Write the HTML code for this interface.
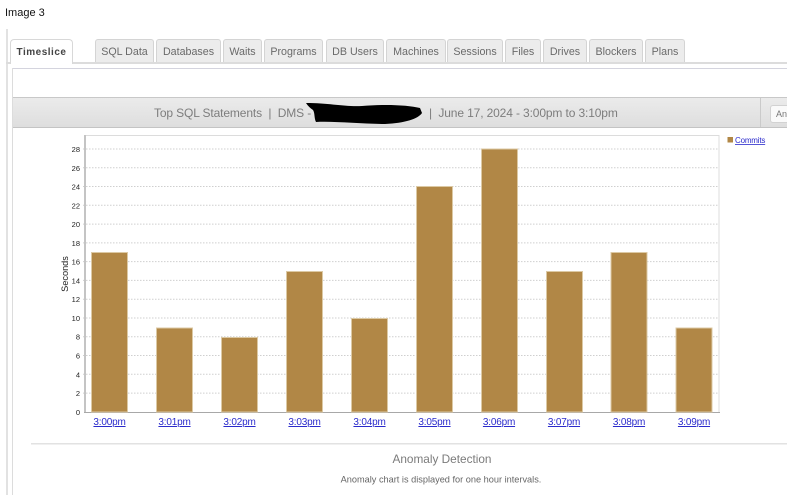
<!DOCTYPE html>
<html><head><meta charset="utf-8">
<style>
html,body{margin:0;padding:0;background:#fff;}
body{width:797px;height:495px;overflow:hidden;position:relative;font-family:"Liberation Sans",sans-serif;}
.a{position:absolute;}
.tab{position:absolute;top:39px;height:23px;box-sizing:border-box;background:#ececec;border:1px solid #d4d4d4;border-bottom:none;border-radius:3px 3px 0 0;color:#6a6a6a;font-size:10.7px;line-height:24px;text-align:center;}
</style></head><body>
<div class="a" style="left:5px;top:6px;font-size:11px;line-height:14px;color:#111;">Image 3</div>

<div class="a" style="left:6px;top:29px;width:2px;height:466px;background:#e2e2e2;"></div>
<div class="a" style="left:6px;top:62px;width:781px;height:2px;background:#dcdcdc;"></div>

<div class="tab" style="left:95px;width:59px;">SQL Data</div>
<div class="tab" style="left:156px;width:65px;">Databases</div>
<div class="tab" style="left:223px;width:39px;">Waits</div>
<div class="tab" style="left:264px;width:59px;">Programs</div>
<div class="tab" style="left:326px;width:58px;">DB Users</div>
<div class="tab" style="left:386px;width:60px;">Machines</div>
<div class="tab" style="left:447px;width:56px;">Sessions</div>
<div class="tab" style="left:505px;width:36px;">Files</div>
<div class="tab" style="left:543px;width:44px;">Drives</div>
<div class="tab" style="left:589px;width:54px;">Blockers</div>
<div class="tab" style="left:645px;width:40px;">Plans</div>

<div class="a" style="left:10px;top:39px;width:63px;height:25px;box-sizing:border-box;background:#fff;border:1px solid #d8d8d8;border-bottom:none;border-radius:4px 4px 0 0;color:#444;font-size:10px;font-weight:bold;line-height:25px;text-align:center;letter-spacing:.5px;">Timeslice</div>

<div class="a" style="left:12px;top:68px;width:775px;height:1px;background:#d4d4de;"></div>
<div class="a" style="left:12px;top:68px;width:1px;height:427px;background:#dcdcdc;"></div>

<div class="a" style="left:13px;top:97px;width:774px;height:31px;box-sizing:border-box;background:linear-gradient(#ebebeb,#dedede);border-top:1px solid #c8c8c8;border-bottom:1px solid #c4c4c4;"></div>
<div class="a" style="left:13px;top:99px;width:760px;height:29px;color:#7d7d7d;font-size:12px;line-height:29px;white-space:pre;letter-spacing:-.13px;">
<span class="a" style="left:141px;top:0;">Top SQL Statements  |  DMS -</span>
<span class="a" style="left:416px;top:0;">|  June 17, 2024 - 3:00pm to 3:10pm</span>
</div>
<svg class="a" style="left:300px;top:98px;" width="130" height="28"><path d="M6 5 C30 5 45 9 62 8 C85 6 108 7 120 10 L122 15 C118 21 105 25 85 26 C60 26 35 23 16 24 C14 20 15 15 13 12 C10 10 8 8 6 5 Z" fill="#000"/></svg>
<div class="a" style="left:760px;top:98px;width:1px;height:29px;background:#cacaca;"></div>
<div class="a" style="left:770px;top:105px;width:17px;height:18px;box-sizing:border-box;background:#fafafa;border:1px solid #d2d2d2;border-right:none;border-radius:3px 0 0 3px;color:#777;font-size:9px;line-height:16px;padding-left:5px;overflow:hidden;">An</div>

<svg class="a" style="left:0;top:0;" width="797" height="495" font-family="Liberation Sans, sans-serif">
<rect x="85" y="135.500" width="634" height="277" fill="#fff" stroke="#dcdcdc"/>
<g stroke="#cfcfcf" stroke-dasharray="1.500 1.500">
<path d="M83 149H719M83 167.800H719M83 186.500H719M83 205.300H719M83 224.100H719M83 242.900H719M83 261.600H719M83 280.400H719M83 299.200H719M83 318H719M83 336.700H719M83 355.500H719M83 374.300H719M83 393.100H719"/>
</g>
<rect x="84" y="135" width="2" height="278" fill="#c4c4c4"/>
<rect x="84" y="412" width="636" height="1" fill="#a8a8a8"/>
<g fill="#b18746" stroke="#dcc9a4" stroke-width="1">
<rect x="91.500" y="252.500" width="36" height="159.500"/>
<rect x="156.500" y="328" width="36" height="84"/>
<rect x="221.500" y="337.500" width="36" height="74.500"/>
<rect x="286.500" y="271.500" width="36" height="140.500"/>
<rect x="351.500" y="318.500" width="36" height="93.500"/>
<rect x="416.500" y="186.500" width="36" height="225.500"/>
<rect x="481.500" y="149" width="36" height="263"/>
<rect x="546.500" y="271.500" width="36" height="140.500"/>
<rect x="611" y="252.500" width="36" height="159.500"/>
<rect x="676" y="328" width="36" height="84"/>
</g>
<g font-size="7.500" fill="#222" text-anchor="end">
<text x="80" y="152">28</text><text x="80" y="170.800">26</text><text x="80" y="189.500">24</text><text x="80" y="208.300">22</text><text x="80" y="227.100">20</text><text x="80" y="245.900">18</text><text x="80" y="264.600">16</text><text x="80" y="283.400">14</text><text x="80" y="302.200">12</text><text x="80" y="321">10</text><text x="80" y="339.700">8</text><text x="80" y="358.500">6</text><text x="80" y="377.300">4</text><text x="80" y="396.100">2</text><text x="80" y="415">0</text>
</g>
<text transform="translate(68,274) rotate(-90)" font-size="9.200" fill="#222" text-anchor="middle">Seconds</text>
<g font-size="10" letter-spacing="-.2" fill="#2b2bcc" text-anchor="middle" text-decoration="underline">
<text x="109.500" y="425">3:00pm</text><text x="174.500" y="425">3:01pm</text><text x="239.500" y="425">3:02pm</text><text x="304.500" y="425">3:03pm</text><text x="369.500" y="425">3:04pm</text><text x="434.500" y="425">3:05pm</text><text x="499" y="425">3:06pm</text><text x="564" y="425">3:07pm</text><text x="629" y="425">3:08pm</text><text x="694" y="425">3:09pm</text>
</g>
<rect x="727.500" y="137" width="5.500" height="5.500" fill="#b18746"/>
<text x="735" y="143" font-size="8" letter-spacing="-.2" fill="#2b2bcc" text-decoration="underline">Commits</text>
<rect x="31" y="443" width="756" height="1.500" fill="#e2e2e2"/>
<text x="442" y="463" font-size="11.800" fill="#7b7b7b" text-anchor="middle">Anomaly Detection</text>
<text x="441" y="482.500" font-size="9.200" fill="#666" text-anchor="middle">Anomaly chart is displayed for one hour intervals.</text>
</svg>
<div class="a" style="left:787px;top:0;width:10px;height:495px;background:#fff;"></div>
</body></html>
